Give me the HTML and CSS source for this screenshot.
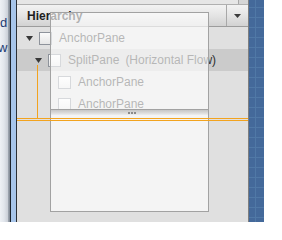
FILE: index.html
```html
<!DOCTYPE html>
<html>
<head>
<meta charset="utf-8">
<link rel="stylesheet" href="styles.css">
</head>
<body>
<div class="screen">
  <div class="behind">
    <span class="bg-text t1">d</span>
    <span class="bg-text t2">ws</span>
  </div>
  <div class="edge"></div>
  <div class="panel">
    <div class="toolbar"><div class="tb-left"></div><div class="tb-right"></div></div>
    <div class="header">
      <span class="title">Hierarchy</span>
      <span class="menu-btn">
        <svg width="7" height="4" viewBox="0 0 7 4"><path d="M0 0H7L3.5 4Z" fill="#3c3c3c"/></svg>
      </span>
    </div>
    <div class="tree">
      <div class="row lvl0">
        <span class="arrow"><svg width="7" height="5" viewBox="0 0 7 5"><path d="M0 0H7L3.5 5Z" fill="#383838"/></svg></span>
        <span class="check"></span>
        <span class="label">AnchorPane</span>
      </div>
      <div class="row lvl1 selected">
        <span class="arrow"><svg width="7" height="5" viewBox="0 0 7 5"><path d="M0 0H7L3.5 5Z" fill="#383838"/></svg></span>
        <span class="check"></span>
        <span class="label">SplitPane</span><span class="label note">(Horizontal Flow)</span>
      </div>
      <div class="row lvl2">
        <span class="arrow"></span>
        <span class="check"></span>
        <span class="label">AnchorPane</span>
      </div>
      <div class="row lvl2">
        <span class="arrow"></span>
        <span class="check"></span>
        <span class="label">AnchorPane</span>
      </div>
    </div>
    <div class="drag-ghost">
      <div class="ghost-top"></div>
      <div class="divider"><span class="grip"><i></i><i></i><i></i></span></div>
    </div>
    <div class="drop-vline"></div>
    <div class="drop-line"></div>
  </div>
  <div class="canvas"></div>
</div>
</body>
</html>
```
FILE: styles.css
```css
html, body {
  margin: 0;
  padding: 0;
  background: #ffffff;
}
.screen {
  display: flex;
  width: 264px;
  height: 222px;
  overflow: hidden;
  font-family: "Liberation Sans", Arial, sans-serif;
}
.behind {
  width: 8px;
  flex: none;
  display: flex;
  flex-direction: column;
  overflow: hidden;
  background: linear-gradient(to right, #eef1f5 0, #e2e6ec 4px, #c9ced6 8px);
}
.bg-text {
  font-size: 13px;
  line-height: 15px;
  color: #1d3a73;
  white-space: nowrap;
}
.t1 { margin-top: 15px; margin-left: 0; }
.t2 { margin-top: 10px; margin-left: -2px; }
.edge {
  width: 9px;
  flex: none;
  background: linear-gradient(to right,
    #a3abb5 0, #7d8590 2px,
    #1c232c 2px, #1c232c 3px,
    #a7c5ea 3px, #a7c5ea 8px,
    #2b2f35 8px, #2b2f35 9px);
}
.panel {
  position: relative;
  width: 231px;
  flex: none;
  background: #e0e0e0;
  border-right: 1px solid #7f7f7f;
  display: flex;
  flex-direction: column;
}
.toolbar {
  height: 4px;
  border-bottom: 1px solid #b0b0b0;
  display: flex;
}
.tb-left { flex: 1; background: #e6e6e6; }
.tb-right { width: 9px; background: #d6d6d6; border-left: 1px solid #a8a8a8; }
.header {
  height: 21px;
  border-bottom: 1px solid #9c9c9c;
  background: linear-gradient(#f3f3f3, #e4e4e4 50%, #d2d2d2);
  display: flex;
  align-items: center;
}
.title {
  flex: 1;
  padding-left: 10px;
  font-weight: bold;
  font-size: 12px;
  color: #1e1e1e;
}
.menu-btn {
  width: 21px;
  height: 21px;
  border-left: 1px solid #a8a8a8;
  display: flex;
  align-items: center;
  justify-content: center;
}
.menu-btn svg { display: block; margin-top: 1px; }
.tree {
  display: flex;
  flex-direction: column;
}
.row {
  height: 22px;
  display: flex;
  align-items: center;
  font-size: 12px;
  color: #2e2e2e;
  white-space: nowrap;
}
.row.selected { background: #cbcbcb; }
.lvl0 { padding-left: 9px; }
.lvl1 { padding-left: 18px; }
.lvl2 { padding-left: 28px; }
.arrow {
  width: 7px;
  height: 5px;
  display: flex;
}
.arrow svg { display: block; }
.check {
  width: 11px;
  height: 11px;
  margin-left: 6px;
  border: 1px solid #8e939b;
  background: linear-gradient(#fbfbfb, #e6e6e6);
}
.label { margin-left: 7px; }
.label.note { margin-left: 6px; }
.drag-ghost {
  position: absolute;
  left: 33px;
  top: 12px;
  width: 157px;
  height: 198px;
  border: 1px solid #a2a2a2;
  background: rgba(255, 255, 255, 0.65);
  display: flex;
  flex-direction: column;
}
.ghost-top { height: 96px; }
.divider {
  height: 5px;
  border-top: 1px solid #a2a2a2;
  background: linear-gradient(#c6c6c6, #dcdcdc 60%, #eeeeee);
  display: flex;
  justify-content: center;
  align-items: center;
}
.grip { display: flex; gap: 1px; margin-left: 4px; }
.grip i { display: block; width: 2px; height: 2px; background: #8a8a8a; }
.drop-vline {
  position: absolute;
  left: 20px;
  top: 65px;
  width: 1px;
  height: 53px;
  background: #f2a31f;
}
.drop-line {
  position: absolute;
  left: 0;
  right: 0;
  top: 118px;
  height: 1px;
  border-top: 1px solid #f2a31f;
  border-bottom: 1px solid #f2a31f;
}
.canvas {
  width: 15px;
  flex: none;
  background-color: #44699a;
  background-image:
    repeating-linear-gradient(to right, transparent 0, transparent 6px, #5078a6 6px, #5078a6 7px, transparent 7px, transparent 10px),
    repeating-linear-gradient(to bottom, transparent 0, transparent 7px, #5078a6 7px, #5078a6 8px, transparent 8px, transparent 10px);
}
```
